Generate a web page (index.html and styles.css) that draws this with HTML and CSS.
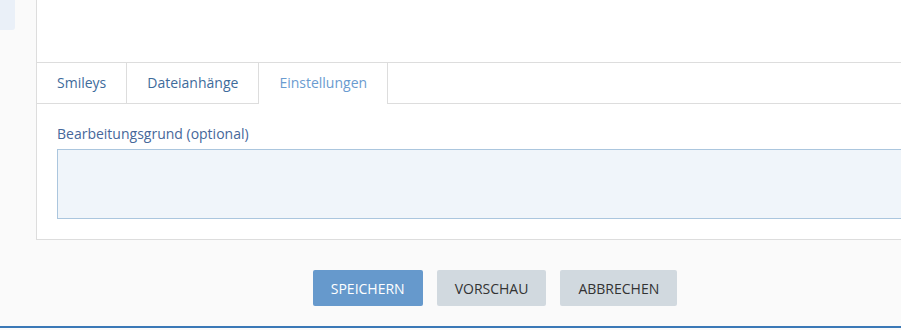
FILE: index.html
```html
<!DOCTYPE html>
<html lang="de">
<head>
    <meta charset="UTF-8">
    <meta name="viewport" content="width=device-width, initial-scale=1.0">
    <title>Beitrag bearbeiten</title>
    <link rel="stylesheet" href="styles.css">
</head>
<body>
    <div class="page">
        <div class="sidebar">
            <div class="sidebar-box"></div>
        </div>

        <div class="main">
            <div class="panel">
                <div class="editor-area"></div>

                <ul class="tabs">
                    <li class="tab">Smileys</li>
                    <li class="tab">Dateianhänge</li>
                    <li class="tab active">Einstellungen</li>
                </ul>

                <div class="tab-content">
                    <label class="field-label" for="reason">Bearbeitungsgrund (optional)</label>
                    <textarea class="field-input" id="reason"></textarea>
                </div>
            </div>

            <div class="form-submit">
                <button class="btn btn-primary">Speichern</button>
                <button class="btn">Vorschau</button>
                <button class="btn">Abbrechen</button>
            </div>
        </div>
    </div>
    <div class="footer-line"></div>
</body>
</html>
```

FILE: styles.css
```css
* {
    margin: 0;
    padding: 0;
    box-sizing: border-box;
}

body {
    font-family: 'Open Sans', 'Liberation Sans', sans-serif;
    font-size: 14px;
    background: #fafafa;
    color: #333;
    overflow: hidden;
}

.page {
    display: flex;
    width: 960px;
}

.sidebar {
    width: 36px;
    flex-shrink: 0;
}

.sidebar-box {
    width: 15px;
    height: 30px;
    background: #eaf0f8;
    border-bottom-right-radius: 3px;
}

.main {
    width: 918px;
    flex-shrink: 0;
}

.panel {
    background: #fff;
    border-left: 1px solid #ddd;
    border-right: 1px solid #ddd;
    border-bottom: 1px solid #ddd;
}

.editor-area {
    height: 62px;
}

.tabs {
    display: flex;
    list-style: none;
    border-top: 1px solid #ddd;
    border-bottom: 1px solid #ddd;
    height: 42px;
}

.tab {
    padding: 0 20px;
    line-height: 40px;
    color: #3e6b9b;
    border-right: 1px solid #ddd;
}

.tab.active {
    color: #6a9bd0;
    background: #fff;
    height: 41px;
}

.tab-content {
    padding: 20px;
}

.field-label {
    display: block;
    line-height: 20px;
    color: #46679a;
    margin-bottom: 5px;
}

.field-input {
    display: block;
    width: 100%;
    height: 70px;
    background: #f0f5fa;
    border: 1px solid #abc6de;
    resize: none;
    font-family: inherit;
}

.form-submit {
    display: flex;
    justify-content: center;
    gap: 14px;
    margin-top: 30px;
    height: 56px;
}

.btn {
    height: 36px;
    padding: 0 18px;
    border: none;
    border-radius: 2px;
    background: #d1d9df;
    color: #333;
    font-family: inherit;
    font-size: 14px;
    text-transform: uppercase;
}

.btn-primary {
    background: #6699cc;
    color: #fff;
}

.footer-line {
    height: 2px;
    background: #3a78b6;
}
```
